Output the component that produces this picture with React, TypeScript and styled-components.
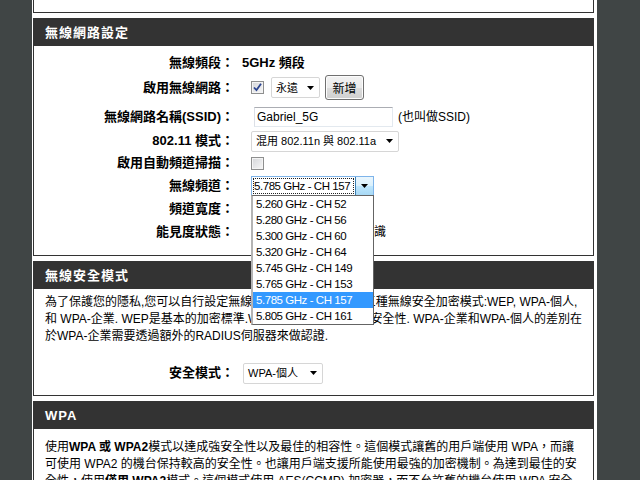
import styled, { createGlobalStyle } from 'styled-components';

const GlobalStyle = createGlobalStyle`
  html, body {
    margin: 0;
    padding: 0;
    background: #404545;
  }
  body {
    font-family: 'Liberation Sans', 'Noto Sans CJK TC', sans-serif;
    font-size: 12px;
    color: #000;
  }
`;

const CHANNELS = [
  '5.260 GHz - CH 52',
  '5.280 GHz - CH 56',
  '5.300 GHz - CH 60',
  '5.320 GHz - CH 64',
  '5.745 GHz - CH 149',
  '5.765 GHz - CH 153',
  '5.785 GHz - CH 157',
  '5.805 GHz - CH 161',
];
const SELECTED = '5.785 GHz - CH 157';

function Arrow() {
  return (
    <svg width="7" height="4" viewBox="0 0 7 4">
      <path d="M0 0h7L3.5 4z" fill="#000" />
    </svg>
  );
}

function Select({ text, w, ml }: { text: string; w: number; ml?: number }) {
  return (
    <SelectBox $w={w} $ml={ml}>
      <span>{text}</span>
      <Arrow />
    </SelectBox>
  );
}

function Checkbox({ checked, ml }: { checked?: boolean; ml?: number }) {
  return (
    <Check $ml={ml}>
      {checked && (
        <svg width="11" height="11" viewBox="0 0 11 11">
          <path d="M2 5.5l2.5 2.6L9 1.8" fill="none" stroke="#2c4590" strokeWidth="1.8" />
        </svg>
      )}
    </Check>
  );
}

export default function App() {
  return (
    <>
      <GlobalStyle />
      <Page>
        <Column>
          <Stub />

          <Section>
            <Header>無線網路設定</Header>
            <FormBody>
              <Row $h={24}>
                <Label>無線頻段：</Label>
                <Value>
                  <Strong>5GHz 頻段</Strong>
                </Value>
              </Row>
              <Row $h={25}>
                <Label>啟用無線網路：</Label>
                <Value>
                  <Checkbox checked ml={9} />
                  <Select text="永遠" w={49} ml={7} />
                  <Button>新增</Button>
                </Value>
              </Row>
              <Row $h={26} $mt={4}>
                <Label>無線網路名稱(SSID)：</Label>
                <Value>
                  <TextInput>Gabriel_5G</TextInput>
                  <Hint>(也叫做SSID)</Hint>
                </Value>
              </Row>
              <Row $h={22}>
                <Label>802.11 模式：</Label>
                <Value>
                  <Select text="混用 802.11n 與 802.11a" w={148} ml={9} />
                </Value>
              </Row>
              <Row $h={22}>
                <Label>啟用自動頻道掃描：</Label>
                <Value>
                  <Checkbox ml={9} />
                </Value>
              </Row>
              <Row $h={24}>
                <Label>無線頻道：</Label>
                <Value>
                  <ChannelSelect>
                    <FocusText>{SELECTED}</FocusText>
                    <DropButton>
                      <Arrow />
                    </DropButton>
                    <DropList>
                      {CHANNELS.map((c) => (
                        <Option key={c} $active={c === SELECTED}>
                          {c}
                        </Option>
                      ))}
                    </DropList>
                  </ChannelSelect>
                </Value>
              </Row>
              <Row $h={22}>
                <Label>頻道寬度：</Label>
                <Value>
                  <Select text="20 MHz" w={70} ml={9} />
                </Value>
              </Row>
              <Row $h={24}>
                <Label>能見度狀態：</Label>
                <Value>
                  <Radio $ml={9} $on />
                  <RadioText>可見</RadioText>
                  <Radio $ml={31} />
                  <RadioText>無法辨識</RadioText>
                </Value>
              </Row>
            </FormBody>
          </Section>

          <Section>
            <Header>無線安全模式</Header>
            <SecurityBody>
              <Para>
                <Line>為了保護您的隱私,您可以自行設定無線安全性.本裝置可支援三種無線安全加密模式:WEP, WPA-個人,</Line>
                <Line>和 WPA-企業. WEP是基本的加密標準.WPA提供了較高等級的安全性. WPA-企業和WPA-個人的差別在</Line>
                <Line>於WPA-企業需要透過額外的RADIUS伺服器來做認證.</Line>
              </Para>
              <Row $h={22} $mt={17}>
                <Label>安全模式：</Label>
                <Value>
                  <Select text="WPA-個人" w={80} ml={1} />
                </Value>
              </Row>
            </SecurityBody>
          </Section>

          <Section>
            <Header>WPA</Header>
            <WpaBody>
              <Para>
                <Line>
                  使用<b>WPA 或 WPA2</b>模式以達成強安全性以及最佳的相容性。這個模式讓舊的用戶端使用 WPA，而讓
                </Line>
                <Line>可使用 WPA2 的機台保持較高的安全性。也讓用戶端支援所能使用最強的加密機制。為達到最佳的安</Line>
                <Line>
                  全性，使用<b>僅用 WPA2</b>模式。這個模式使用 AES(CCMP) 加密器，而不允許舊的機台使用 WPA 安全
                </Line>
              </Para>
            </WpaBody>
          </Section>
        </Column>
      </Page>
    </>
  );
}

const Page = styled.div`
  width: 640px;
  height: 480px;
  overflow: hidden;
  background: #404545;
`;

const Column = styled.div`
  margin-left: 32px;
  width: 565px;
  height: 480px;
  box-sizing: border-box;
  padding: 0 3px 0 1px;
  background: #fff;
  display: flex;
  flex-direction: column;
  gap: 5px;
`;

const Stub = styled.div`
  flex: none;
  height: 12px;
  border: 1px solid #333;
  border-top: none;
`;

const Section = styled.div`
  flex: none;
  border: 1px solid #333;
  background: #fff;
`;

const Header = styled.div`
  height: 27px;
  line-height: 27px;
  padding-left: 11px;
  background: #333;
  color: #fff;
  font-family: 'Liberation Sans', 'Noto Sans CJK TC', sans-serif;
  font-weight: bold;
  font-size: 13px;
  letter-spacing: 1px;
`;

const FormBody = styled.div`
  height: 209px;
  box-sizing: border-box;
  padding-top: 5px;
`;

const SecurityBody = styled.div`
  height: 106px;
  box-sizing: border-box;
  padding-top: 5px;
`;

const WpaBody = styled.div`
  padding-top: 10px;
`;

const Row = styled.div<{ $h: number; $mt?: number }>`
  display: grid;
  grid-template-columns: 200px 1fr;
  column-gap: 8px;
  align-items: center;
  height: ${(p) => p.$h}px;
  margin-top: ${(p) => p.$mt ?? 0}px;
`;

const Label = styled.div`
  text-align: right;
  white-space: nowrap;
  font-weight: bold;
  font-size: 13px;
  line-height: 16px;
`;

const Value = styled.div`
  display: flex;
  align-items: center;
  white-space: nowrap;
  line-height: 16px;
`;

const Strong = styled.span`
  font-weight: bold;
  font-size: 13px;
`;

const SelectBox = styled.div<{ $w: number; $ml?: number }>`
  box-sizing: border-box;
  width: ${(p) => p.$w}px;
  height: 21px;
  margin-left: ${(p) => p.$ml ?? 0}px;
  padding: 0 5px 0 4px;
  display: flex;
  align-items: center;
  justify-content: space-between;
  border: 1px solid #d6d6d6;
  border-radius: 2px;
  background: #fff;
  font-size: 11px;
`;

const Check = styled.span<{ $ml?: number }>`
  position: relative;
  flex: none;
  box-sizing: border-box;
  width: 13px;
  height: 13px;
  margin-left: ${(p) => p.$ml ?? 0}px;
  border: 1px solid #8e8f8f;
  background: linear-gradient(135deg, #d4d6d9, #f7f7f7);
  box-shadow: inset 0 0 0 1px #f4f4f4;

  svg {
    position: absolute;
    left: 0;
    top: 0;
  }
`;

const Radio = styled.span<{ $ml?: number; $on?: boolean }>`
  flex: none;
  box-sizing: border-box;
  width: 13px;
  height: 13px;
  margin-left: ${(p) => p.$ml ?? 0}px;
  border-radius: 50%;
  border: 1px solid #8e8f8f;
  background: ${(p) => (p.$on ? 'radial-gradient(circle, #2c4590 0 3px, #eee 3.5px)' : '#eee')};
`;

const RadioText = styled.span`
  margin-left: 3px;
`;

const Button = styled.button`
  margin-left: 5px;
  width: 39px;
  height: 25px;
  padding: 0;
  border: 1px solid #707070;
  border-radius: 3px;
  background: linear-gradient(#f2f2f2 0%, #ebebeb 50%, #dddddd 51%, #cfcfcf 100%);
  box-shadow: inset 0 0 0 1px #fcfcfc;
  font-family: 'Noto Sans CJK TC', sans-serif;
  font-size: 12px;
  color: #000;
`;

const TextInput = styled.div`
  box-sizing: border-box;
  width: 139px;
  height: 20px;
  margin-left: 12px;
  padding-left: 2px;
  border: 1px solid #e3e9ef;
  border-top-color: #abadb3;
  border-left-color: #dbdfe6;
  font-size: 12px;
  line-height: 18px;
`;

const Hint = styled.span`
  margin-left: 5px;
`;

const ChannelSelect = styled.div`
  position: relative;
  box-sizing: border-box;
  width: 123px;
  height: 20px;
  margin-left: 9px;
  display: flex;
  border: 1px solid #7eb4ea;
  background: #fff;
`;

const FocusText = styled.div`
  flex: 1;
  margin: 1px;
  padding-left: 1px;
  outline: 1px dotted #222;
  outline-offset: -1px;
  overflow: hidden;
  white-space: nowrap;
  font-size: 11.5px;
  letter-spacing: -0.45px;
  line-height: 16px;
`;

const DropButton = styled.div`
  flex: none;
  width: 17px;
  display: flex;
  align-items: center;
  justify-content: center;
  border-left: 1px solid #3c7fb1;
  background: linear-gradient(#eaf6fd 0%, #d9f0fc 50%, #bee6fd 51%, #a7d9f5 100%);
`;

const DropList = styled.div`
  position: absolute;
  z-index: 5;
  top: 100%;
  left: -1px;
  width: 123px;
  box-sizing: border-box;
  border: 1px solid #646464;
  border-left: 2px solid #b4b4b4;
  background: #fff;
`;

const Option = styled.div<{ $active?: boolean }>`
  height: 16px;
  line-height: 16px;
  padding-left: 3px;
  font-size: 11.5px;
  letter-spacing: -0.45px;
  white-space: nowrap;
  background: ${(p) => (p.$active ? '#3399ff' : '#fff')};
  color: ${(p) => (p.$active ? '#fff' : '#000')};
`;

const Para = styled.div`
  padding-left: 11px;
  line-height: 17px;
  font-size: 12px;
`;

const Line = styled.span`
  display: block;
  white-space: nowrap;
`;
